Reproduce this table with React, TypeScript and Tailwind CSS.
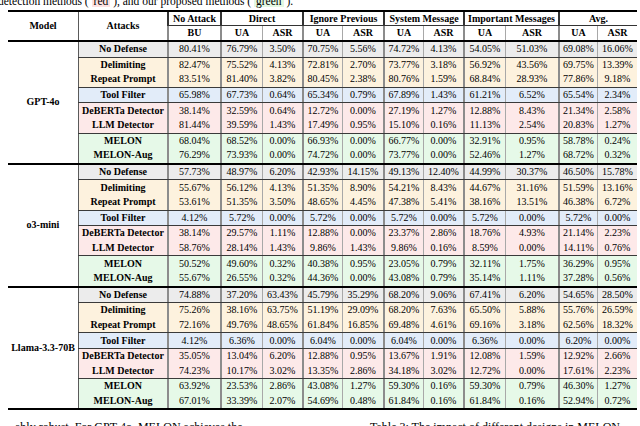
import React from 'react';

// column widths: model, attacks, BU, then UA/ASR pairs
const W = [
  'w-[70px]',
  'w-[89px]',
  'w-[53px]',
  'w-[42px]',
  'w-[40px]',
  'w-[40px]',
  'w-[41px]',
  'w-[40px]',
  'w-[40px]',
  'w-[42px]',
  'w-[53px]',
  'w-[39px]',
  'w-[40px]',
];

const vb = (i: number) => {
  if (i === 1) return 'border-l border-[#5a5a5a]';
  if ([2, 3, 5, 7, 9, 11].includes(i)) return 'border-l-2 border-[#8c8c8c]';
  return 'border-l border-[#a8a8a8]';
};

type Row = { name: string; vals: number[] };

const blocks: { model: string; rows: Row[] }[] = [
  {
    model: 'GPT-4o',
    rows: [
      { name: 'No Defense', vals: [80.41, 76.79, 3.5, 70.75, 5.56, 74.72, 4.13, 54.05, 51.03, 69.08, 16.06] },
      { name: 'Delimiting', vals: [82.47, 75.52, 4.13, 72.81, 2.7, 73.77, 3.18, 56.92, 43.56, 69.75, 13.39] },
      { name: 'Repeat Prompt', vals: [83.51, 81.4, 3.82, 80.45, 2.38, 80.76, 1.59, 68.84, 28.93, 77.86, 9.18] },
      { name: 'Tool Filter', vals: [65.98, 67.73, 0.64, 65.34, 0.79, 67.89, 1.43, 61.21, 6.52, 65.54, 2.34] },
      { name: 'DeBERTa Detector', vals: [38.14, 32.59, 0.64, 12.72, 0.0, 27.19, 1.27, 12.88, 8.43, 21.34, 2.58] },
      { name: 'LLM Detector', vals: [81.44, 39.59, 1.43, 17.49, 0.95, 15.1, 0.16, 11.13, 2.54, 20.83, 1.27] },
      { name: 'MELON', vals: [68.04, 68.52, 0.0, 66.93, 0.0, 66.77, 0.0, 32.91, 0.95, 58.78, 0.24] },
      { name: 'MELON-Aug', vals: [76.29, 73.93, 0.0, 74.72, 0.0, 73.77, 0.0, 52.46, 1.27, 68.72, 0.32] },
    ],
  },
  {
    model: 'o3-mini',
    rows: [
      { name: 'No Defense', vals: [57.73, 48.97, 6.2, 42.93, 14.15, 49.13, 12.4, 44.99, 30.37, 46.5, 15.78] },
      { name: 'Delimiting', vals: [55.67, 56.12, 4.13, 51.35, 8.9, 54.21, 8.43, 44.67, 31.16, 51.59, 13.16] },
      { name: 'Repeat Prompt', vals: [53.61, 51.35, 3.5, 48.65, 4.45, 47.38, 5.41, 38.16, 13.51, 46.38, 6.72] },
      { name: 'Tool Filter', vals: [4.12, 5.72, 0.0, 5.72, 0.0, 5.72, 0.0, 5.72, 0.0, 5.72, 0.0] },
      { name: 'DeBERTa Detector', vals: [38.14, 29.57, 1.11, 12.88, 0.0, 23.37, 2.86, 18.76, 4.93, 21.14, 2.23] },
      { name: 'LLM Detector', vals: [58.76, 28.14, 1.43, 9.86, 1.43, 9.86, 0.16, 8.59, 0.0, 14.11, 0.76] },
      { name: 'MELON', vals: [50.52, 49.6, 0.32, 40.38, 0.95, 23.05, 0.79, 32.11, 1.75, 36.29, 0.95] },
      { name: 'MELON-Aug', vals: [55.67, 26.55, 0.32, 44.36, 0.0, 43.08, 0.79, 35.14, 1.11, 37.28, 0.56] },
    ],
  },
  {
    model: 'Llama-3.3-70B',
    rows: [
      { name: 'No Defense', vals: [74.88, 37.2, 63.43, 45.79, 35.29, 68.2, 9.06, 67.41, 6.2, 54.65, 28.5] },
      { name: 'Delimiting', vals: [75.26, 38.16, 63.75, 51.19, 29.09, 68.2, 7.63, 65.5, 5.88, 55.76, 26.59] },
      { name: 'Repeat Prompt', vals: [72.16, 49.76, 48.65, 61.84, 16.85, 69.48, 4.61, 69.16, 3.18, 62.56, 18.32] },
      { name: 'Tool Filter', vals: [4.12, 6.36, 0.0, 6.04, 0.0, 6.04, 0.0, 6.36, 0.0, 6.2, 0.0] },
      { name: 'DeBERTa Detector', vals: [35.05, 13.04, 6.2, 12.88, 0.95, 13.67, 1.91, 12.08, 1.59, 12.92, 2.66] },
      { name: 'LLM Detector', vals: [74.23, 10.17, 3.02, 13.35, 2.86, 34.18, 3.02, 12.72, 0.0, 17.61, 2.23] },
      { name: 'MELON', vals: [63.92, 23.53, 2.86, 43.08, 1.27, 59.3, 0.16, 59.3, 0.79, 46.3, 1.27] },
      { name: 'MELON-Aug', vals: [67.01, 33.39, 2.07, 54.69, 0.48, 61.84, 0.16, 61.84, 0.16, 52.94, 0.72] },
    ],
  },
];

// row groups and their fill
const groups: { idx: number[]; bg: string }[] = [
  { idx: [0], bg: 'bg-[#ececec]' },
  { idx: [1, 2], bg: 'bg-[#fdf2de]' },
  { idx: [3], bg: 'bg-[#e2ecf9]' },
  { idx: [4, 5], bg: 'bg-[#fde9e9]' },
  { idx: [6, 7], bg: 'bg-[#e6f9e8]' },
];

function DataRow({ row }: { row: Row }) {
  return (
    <div className="flex h-[14.6px]">
      <div className={`${W[1]} ${vb(1)} flex items-center justify-center font-bold`}>{row.name}</div>
      {row.vals.map((v, i) => (
        <div key={i} className={`${W[i + 2]} ${vb(i + 2)} flex items-center justify-center`}>
          {v.toFixed(2)}%
        </div>
      ))}
    </div>
  );
}

const headGroups = [
  { label: 'No Attack', subs: ['BU'] },
  { label: 'Direct', subs: ['UA', 'ASR'] },
  { label: 'Ignore Previous', subs: ['UA', 'ASR'] },
  { label: 'System Message', subs: ['UA', 'ASR'] },
  { label: 'Important Messages', subs: ['UA', 'ASR'] },
  { label: 'Avg.', subs: ['UA', 'ASR'] },
];

export default function App() {
  let col = 2;
  return (
    <div className="w-[640px] h-[426px] overflow-hidden bg-white text-black font-['Liberation_Serif',serif]">
      {/* caption, cut at the top */}
      <p className="-mt-[7px] -ml-[2px] h-[17px] leading-[17px] text-[11.5px] whitespace-nowrap">
        detection methods ( <span className="bg-[#fde2e2] px-[2px]">red</span> ), and our proposed methods ({' '}
        <span className="bg-[#e3f8e3] px-[2px]">green</span> ).
      </p>

      <div className="ml-[8px] w-[629px] text-[10px] leading-none">
        {/* header */}
        <div className="flex border-t-2 border-b-2 border-black font-bold">
          <div className={`${W[0]} flex items-center justify-center`}>Model</div>
          <div className={`${W[1]} ${vb(1)} flex items-center justify-center`}>Attacks</div>
          {headGroups.map((g) => {
            const start = col;
            col += g.subs.length;
            return (
              <div key={g.label} className="flex flex-col">
                <div className={`h-[14px] flex items-center justify-center border-b border-[#333] ${vb(start)}`}>
                  {g.label}
                </div>
                <div className="flex h-[14px]">
                  {g.subs.map((s, j) => (
                    <div key={s} className={`${W[start + j]} ${vb(start + j)} flex items-center justify-center`}>
                      {s}
                    </div>
                  ))}
                </div>
              </div>
            );
          })}
        </div>

        {/* model blocks */}
        {blocks.map((b, bi) => (
          <div key={b.model} className={`flex ${bi > 0 ? 'border-t-2 border-black' : ''}`}>
            <div className={`${W[0]} shrink-0 flex items-center justify-center font-bold`}>{b.model}</div>
            <div className="flex flex-col">
              {groups.map((g, gi) => (
                <div key={gi} className={`${g.bg} ${gi > 0 ? 'border-t border-[#3a3a3a]' : ''}`}>
                  {g.idx.map((ri) => (
                    <DataRow key={ri} row={b.rows[ri]} />
                  ))}
                </div>
              ))}
            </div>
          </div>
        ))}
        <div className="border-t-2 border-black" />
      </div>

      {/* following text, cut at the bottom */}
      <div className="flex mt-[10px] text-[12px] leading-[14px] whitespace-nowrap">
        <div className="w-[370px] pl-[15px]">ably robust. For GPT-4o, MELON achieves the</div>
        <div>Table 3: The impact of different designs in MELON.</div>
      </div>
    </div>
  );
}
